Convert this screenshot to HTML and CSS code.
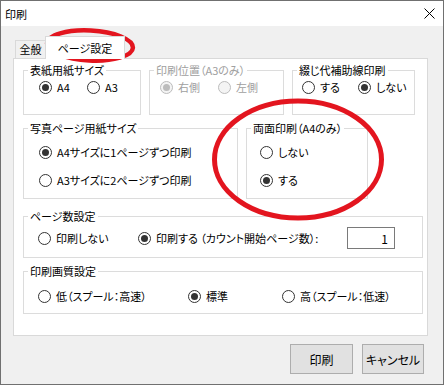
FILE: index.html
```html
<!DOCTYPE html>
<html lang="ja">
<head>
<meta charset="UTF-8" />
<title>印刷</title>
<link rel="stylesheet" href="styles.css">
</head>
<body>
    <div class="window">
        <div class="titlebar">
            <span class="title">印刷</span>
            <svg class="close" width="11" height="11" viewBox="0 0 11 11">
                <path d="M0.5 0.5 L10.5 10.5 M10.5 0.5 L0.5 10.5" stroke="#000" stroke-width="1" fill="none" />
            </svg>
        </div>

        <div class="dlg">
            <div class="tabs">
                <div class="tab">全般</div>
                <div class="tab active">ページ設定</div>
            </div>

            <div class="panel">
                <div class="row row-top">
                    <fieldset class="grp g-cover">
                        <legend>表紙用紙サイズ</legend>
                        <div class="opts">
                            <label class="opt"><span class="radio on"></span>A4</label>
                            <label class="opt"><span class="radio"></span>A3</label>
                        </div>
                    </fieldset>
                    <fieldset class="grp g-pos off">
                        <legend>印刷位置（A3のみ）</legend>
                        <div class="opts">
                            <label class="opt"><span class="radio on"></span>右側</label>
                            <label class="opt"><span class="radio"></span>左側</label>
                        </div>
                    </fieldset>
                    <fieldset class="grp g-line">
                        <legend>綴じ代補助線印刷</legend>
                        <div class="opts">
                            <label class="opt"><span class="radio"></span>する</label>
                            <label class="opt"><span class="radio on"></span>しない</label>
                        </div>
                    </fieldset>
                </div>

                <div class="row row-mid">
                    <fieldset class="grp g-photo">
                        <legend>写真ページ用紙サイズ</legend>
                        <div class="opts">
                            <label class="opt"><span class="radio on"></span>A4サイズに1ページずつ印刷</label>
                            <label class="opt"><span class="radio"></span>A3サイズに2ページずつ印刷</label>
                        </div>
                    </fieldset>
                    <fieldset class="grp g-duplex">
                        <legend>両面印刷（A4のみ）</legend>
                        <div class="opts">
                            <label class="opt"><span class="radio"></span>しない</label>
                            <label class="opt"><span class="radio on"></span>する</label>
                        </div>
                    </fieldset>
                </div>

                <fieldset class="grp g-pages">
                    <legend>ページ数設定</legend>
                    <div class="opts">
                        <label class="opt"><span class="radio"></span>印刷しない</label>
                        <label class="opt"><span class="radio on"></span>印刷する （カウント開始ページ数）:</label>
                        <input class="num" type="text" value="1" />
                    </div>
                </fieldset>

                <fieldset class="grp g-quality">
                    <legend>印刷画質設定</legend>
                    <div class="opts">
                        <label class="opt"><span class="radio"></span>低（スプール：高速）</label>
                        <label class="opt"><span class="radio on"></span>標準</label>
                        <label class="opt"><span class="radio"></span>高（スプール：低速）</label>
                    </div>
                </fieldset>
            </div>

            <div class="buttons">
                <button class="btn btn-print">印刷</button>
                <button class="btn btn-cancel">キャンセル</button>
            </div>
        </div>
    </div>

    <!-- 赤い丸の書き込み -->
    <svg class="marks" width="447" height="389" viewBox="0 0 447 389">
        <ellipse cx="90" cy="45.5" rx="43" ry="15" transform="rotate(3 90 45.5)" fill="none" stroke="#e3151f" stroke-width="4.5" />
        <ellipse cx="298" cy="159.5" rx="83.5" ry="58.5" fill="none" stroke="#e3151f" stroke-width="5" />
    </svg>
</body>
</html>
```

FILE: styles.css
```css
body {
    margin: 0;
    background: #ffffff;
    font-family: "Noto Sans CJK JP", "Noto Sans", sans-serif;
    font-size: 11px;
    line-height: 14px;
    font-feature-settings: "palt";
    color: #000;
    position: relative;
    width: 447px;
    height: 389px;
    overflow: hidden;
}

.window {
    width: 444px;
    height: 385px;
    box-sizing: border-box;
    border: 1px solid #707070;
    background: #f0f0f0;
}

.titlebar {
    height: 25px;
    background: #ffffff;
    display: flex;
    align-items: center;
    padding-left: 4px;
}

.title {
    font-size: 11px;
    line-height: 14px;
}

.close {
    margin-left: auto;
    margin-right: 8px;
}

.dlg {
    padding: 10px 15px 0 12px;
}

/* タブ */
.tabs {
    display: flex;
    align-items: flex-end;
    height: 22px;
}

.tab {
    box-sizing: border-box;
    margin-left: 2px;
    width: 31px;
    height: 18px;
    border: 1px solid #d9d9d9;
    border-bottom: none;
    background: #f0f0f0;
    text-align: center;
    line-height: 17px;
}

.tab.active {
    margin-left: -1px;
    margin-bottom: -1px;
    width: 80px;
    height: 23px;
    background: #ffffff;
    line-height: 22px;
    position: relative;
    z-index: 1;
}

.panel {
    box-sizing: border-box;
    height: 278px;
    background: #ffffff;
    border: 1px solid #d9d9d9;
    padding: 4px 0 0 9px;
}

.row {
    display: flex;
    gap: 8px;
}

.row-mid {
    margin-top: 6px;
}

/* グループボックス */
.grp {
    box-sizing: border-box;
    margin: 0;
    padding: 0;
    min-width: 0;
    border: 1px solid #dcdcdc;
}

.grp legend {
    margin-left: 4px;
    padding: 0 2px;
    line-height: 14px;
}

.grp.off legend,
.grp.off .opt {
    color: #a0a0a0;
}

.opts {
    display: grid;
    align-items: center;
}

.opt {
    display: flex;
    align-items: center;
    height: 14px;
    white-space: pre;
}

.radio {
    box-sizing: border-box;
    width: 13px;
    height: 13px;
    border: 1px solid #333;
    border-radius: 50%;
    background: #fff;
    margin-right: 5px;
    flex: none;
    position: relative;
}

.radio.on::after {
    content: "";
    position: absolute;
    left: 2px;
    top: 2px;
    width: 7px;
    height: 7px;
    border-radius: 50%;
    background: #333;
}

.off .radio {
    border-color: #bcbcbc;
    background: #f4f4f4;
}

.off .radio.on::after {
    background: #bcbcbc;
}

.g-cover { width: 118px; }
.g-cover .opts {
    grid-template-columns: 48px auto;
    padding: 3px 0 20px 15px;
}

.g-pos { width: 135px; }
.g-pos .opts {
    grid-template-columns: 58px auto;
    padding: 3px 0 20px 10px;
}

.g-line { width: 123px; }
.g-line .opts {
    grid-template-columns: 56px auto;
    padding: 3px 0 20px 9px;
}

.g-photo { width: 215px; }
.g-photo .opts {
    row-gap: 14px;
    padding: 10px 0 11px 15px;
}

.g-duplex { width: 122px; }
.g-duplex .opts {
    row-gap: 14px;
    padding: 10px 0 11px 13px;
}

.g-pages {
    width: 400px;
    margin-top: 10px;
}
.g-pages .opts {
    display: flex;
    align-items: center;
    padding: 4px 0 8px 14px;
}
.g-pages .opt:first-child {
    width: 100px;
}

.num {
    box-sizing: border-box;
    width: 48px;
    height: 22px;
    margin: 0 27px 0 auto;
    border: 1px solid #7a7a7a;
    padding: 0 6px 0 0;
    font-family: inherit;
    font-size: 12px;
    text-align: right;
    background: #fff;
    color: #000;
}

.g-quality {
    width: 400px;
    margin-top: 6px;
}
.g-quality .opts {
    grid-template-columns: 150px 94px auto;
    padding: 11px 0 10px 14px;
}

/* ボタン */
.buttons {
    display: flex;
    justify-content: flex-end;
    gap: 9px;
    margin-top: 8px;
    margin-right: 4px;
}

.btn {
    box-sizing: border-box;
    height: 30px;
    background: #e1e1e1;
    border: 1px solid #adadad;
    font-family: inherit;
    font-size: 12px;
    font-feature-settings: "palt";
    color: #000;
    padding: 0;
}

.btn-print { width: 63px; }
.btn-cancel { width: 62px; }

.marks {
    position: absolute;
    left: 0;
    top: 0;
    pointer-events: none;
}
```
